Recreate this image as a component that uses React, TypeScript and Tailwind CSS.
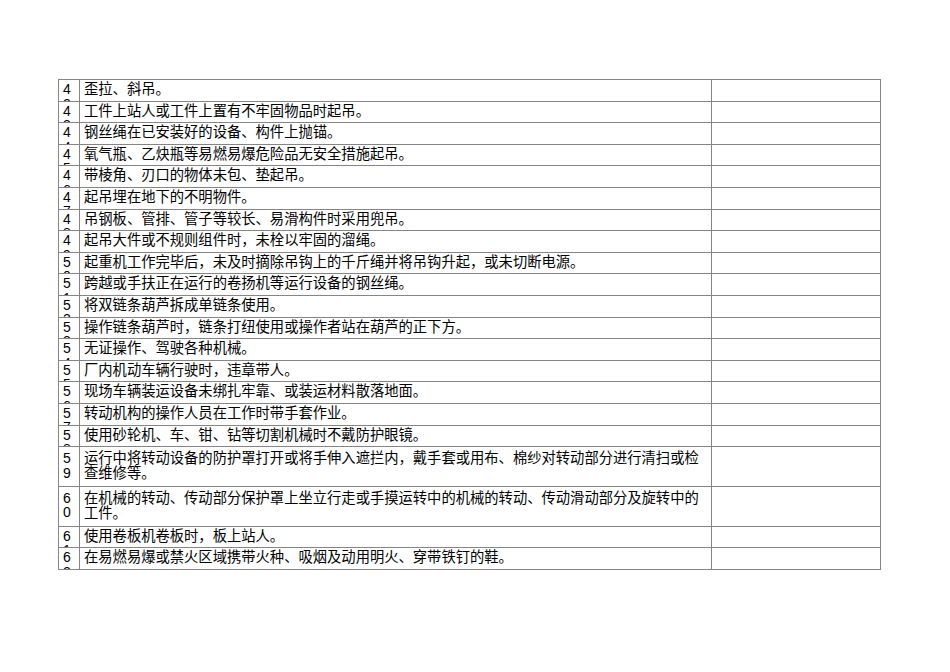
const rows: { no: string; text: string; tall?: boolean }[] = [
  { no: "42", text: "歪拉、斜吊。" },
  { no: "43", text: "工件上站人或工件上置有不牢固物品时起吊。" },
  { no: "44", text: "钢丝绳在已安装好的设备、构件上抛锚。" },
  { no: "45", text: "氧气瓶、乙炔瓶等易燃易爆危险品无安全措施起吊。" },
  { no: "46", text: "带棱角、刃口的物体未包、垫起吊。" },
  { no: "47", text: "起吊埋在地下的不明物件。" },
  { no: "48", text: "吊钢板、管排、管子等较长、易滑构件时采用兜吊。" },
  { no: "49", text: "起吊大件或不规则组件时，未栓以牢固的溜绳。" },
  { no: "50", text: "起重机工作完毕后，未及时摘除吊钩上的千斤绳并将吊钩升起，或未切断电源。" },
  { no: "51", text: "跨越或手扶正在运行的卷扬机等运行设备的钢丝绳。" },
  { no: "52", text: "将双链条葫芦拆成单链条使用。" },
  { no: "53", text: "操作链条葫芦时，链条打纽使用或操作者站在葫芦的正下方。" },
  { no: "54", text: "无证操作、驾驶各种机械。" },
  { no: "55", text: "厂内机动车辆行驶时，违章带人。" },
  { no: "56", text: "现场车辆装运设备未绑扎牢靠、或装运材料散落地面。" },
  { no: "57", text: "转动机构的操作人员在工作时带手套作业。" },
  { no: "58", text: "使用砂轮机、车、钳、钻等切割机械时不戴防护眼镜。" },
  {
    no: "59",
    text: "运行中将转动设备的防护罩打开或将手伸入遮拦内，戴手套或用布、棉纱对转动部分进行清扫或检查维修等。",
    tall: true,
  },
  {
    no: "60",
    text: "在机械的转动、传动部分保护罩上坐立行走或手摸运转中的机械的转动、传动滑动部分及旋转中的工件。",
    tall: true,
  },
  { no: "61", text: "使用卷板机卷板时，板上站人。" },
  { no: "62", text: "在易燃易爆或禁火区域携带火种、吸烟及动用明火、穿带铁钉的鞋。" },
]

export default function App() {
  return (
    <div
      className="w-[950px] h-[672px] bg-white pt-[79px] pl-[58px] text-black"
      style={{ fontFamily: '"Liberation Sans", "Noto Sans CJK SC", sans-serif' }}
    >
      <div className="w-[823px] border-t border-l border-[#858585]">
        {rows.map((r) => (
          <div
            key={r.no}
            className={
              "flex border-b border-[#858585] " +
              (r.tall ? "h-[39.8px]" : "h-[21.6px]")
            }
          >
            {/* number column is too narrow, so the second digit wraps and gets clipped */}
            <div
              className={
                "w-[21px] shrink-0 border-r border-[#858585] pl-[4px] pr-[6px] overflow-hidden break-all text-[14px] leading-[14.5px] " +
                (r.tall ? "pt-[4px]" : "pt-[2px]")
              }
            >
              {r.no}
            </div>
            <div
              className={
                "w-[632px] shrink-0 border-r border-[#858585] pl-[4px] pr-[4px] text-[14.3px] leading-[15px] " +
                (r.tall ? "pt-[4px]" : "pt-[2px]")
              }
            >
              {r.text}
            </div>
            <div className="flex-1 border-r border-[#858585]" />
          </div>
        ))}
      </div>
    </div>
  )
}
